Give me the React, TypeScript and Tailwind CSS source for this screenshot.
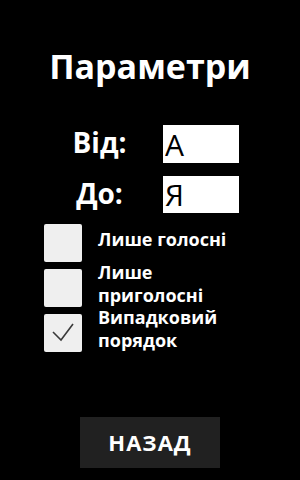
import * as React from "react";

type Opt = { label: React.ReactNode; checked: boolean };

function Box({ checked, onClick }: { checked: boolean; onClick: () => void }) {
  return (
    <button
      onClick={onClick}
      className="relative h-[38px] w-[38px] shrink-0 rounded-[2px] bg-[#efefef]"
    >
      {checked ? (
        <svg className="absolute left-0 top-0" width="38" height="38" viewBox="0 0 38 38" fill="none">
          <path d="M9 18 L17 26 L29 10" stroke="#3a3a3a" strokeWidth="1.6" />
        </svg>
      ) : null}
    </button>
  );
}

export default function App() {
  const [from, setFrom] = React.useState("А");
  const [to, setTo] = React.useState("Я");
  const [opts, setOpts] = React.useState<Opt[]>([
    { label: "Лише голосні", checked: false },
    { label: (<>Лише<br />приголосні</>), checked: false },
    { label: (<>Випадковий<br />порядок</>), checked: true },
  ]);

  const toggle = (i: number) =>
    setOpts((o) => o.map((x, j) => (j === i ? { ...x, checked: !x.checked } : x)));

  return (
    <div className="flex h-[480px] w-[300px] flex-col items-center overflow-hidden bg-black font-['Open_Sans',sans-serif] text-white">
      <h1 className="mt-[49px] text-[34px] font-bold leading-[34px]">Параметри</h1>

      <div className="mt-[42px] grid grid-cols-[111px_76px] gap-x-[8px] gap-y-[13px] self-start pl-[44px]">
        <div className="flex h-[38px] items-center justify-center pb-1 text-[28px] font-bold">Від:</div>
        <input
          value={from}
          onChange={(e) => setFrom(e.target.value)}
          className="h-[38px] w-[76px] bg-white pl-[2px] text-[30px] text-black outline-none"
        />
        <div className="flex h-[38px] items-center justify-center pb-1 text-[28px] font-bold">До:</div>
        <input
          value={to}
          onChange={(e) => setTo(e.target.value)}
          className="h-[37px] w-[76px] bg-white pl-[2px] text-[30px] text-black outline-none"
        />
      </div>

      <div className="mt-[10px] flex flex-col gap-[7px] self-start pl-[44px]">
        {opts.map((o, i) => (
          <div key={i} className="flex h-[38px] items-center gap-[16px]">
            <Box checked={o.checked} onClick={() => toggle(i)} />
            <span className="pb-2 text-[18px] font-bold leading-[23px]">{o.label}</span>
          </div>
        ))}
      </div>

      <button className="mt-[65px] h-[51px] w-[140px] bg-[#212121] text-[22px] font-bold tracking-[1px] text-white">
        НАЗАД
      </button>
    </div>
  );
}
